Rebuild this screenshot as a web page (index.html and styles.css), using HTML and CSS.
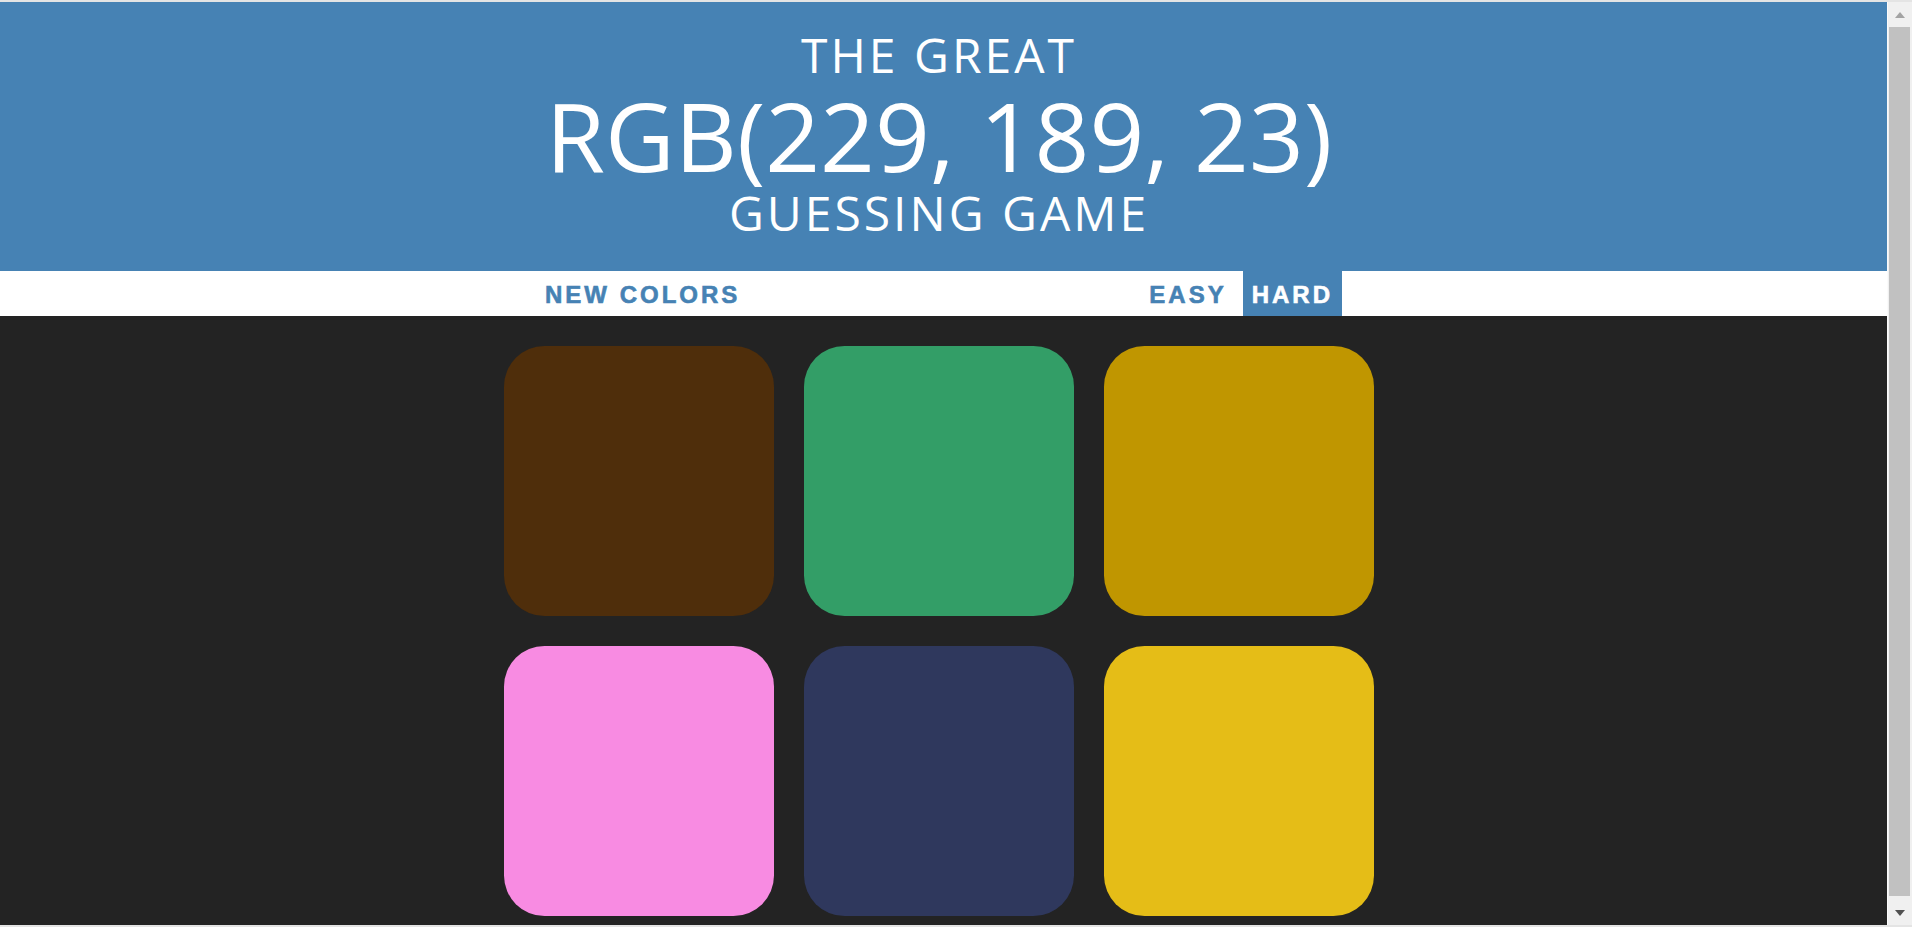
FILE: index.html
```html
<!DOCTYPE html>
<html lang="en">
<head>
<meta charset="utf-8">
<title>Color Game</title>
<link rel="stylesheet" href="styles.css">
</head>
<body>
  <main class="page">
    <h1 class="title">
      <span class="title-line">THE GREAT</span>
      <span class="color-display">RGB(229, 189, 23)</span>
      <span class="title-line">GUESSING GAME</span>
    </h1>
    <nav class="stripe">
      <button class="btn">NEW COLORS</button>
      <span class="message"></span>
      <button class="btn mode">EASY</button>
      <button class="btn mode selected">HARD</button>
    </nav>
    <section class="board">
      <div class="square" style="background: rgb(79, 46, 11);"></div>
      <div class="square" style="background: rgb(51, 158, 103);"></div>
      <div class="square" style="background: rgb(192, 150, 0);"></div>
      <div class="square" style="background: rgb(248, 139, 226);"></div>
      <div class="square" style="background: rgb(47, 56, 93);"></div>
      <div class="square" style="background: rgb(229, 189, 23);"></div>
    </section>
  </main>
  <aside class="scrollbar">
    <div class="scroll-up"></div>
    <div class="scroll-thumb"></div>
    <div class="scroll-down"></div>
  </aside>
</body>
</html>
```
FILE: styles.css
```css
html, body {
  margin: 0;
  padding: 0;
}

body {
  height: 927px;
  box-sizing: border-box;
  border-top: 2px solid #e4e4e4;
  border-bottom: 2px solid #e4e4e4;
  background: #232323;
  overflow: hidden;
  display: flex;
  font-family: "Open Sans", "DejaVu Sans", sans-serif;
}

.page {
  flex: 1;
  min-width: 0;
}

.title {
  margin: 0;
  padding: 27px 9px 31px 0;
  background: #4682b4;
  color: #ffffff;
  font-weight: 400;
  font-size: 48px;
  line-height: 1.1;
  text-align: center;
}

.title-line {
  display: block;
  letter-spacing: 3px;
}

.color-display {
  display: block;
  font-size: 200%;
}

.stripe {
  height: 45px;
  background: #ffffff;
  display: flex;
  justify-content: center;
  align-items: stretch;
  gap: 7px;
  padding-right: 9px;
}

.btn {
  border: none;
  background: none;
  margin: 0;
  padding: 2px 9px 0;
  font-family: "Liberation Sans", Arial, sans-serif;
  font-weight: 700;
  font-size: 24px;
  letter-spacing: 3px;
  color: #4682b4;
  -webkit-text-stroke: 0.6px currentColor;
  cursor: pointer;
  outline: none;
}

.btn.selected {
  background: #4682b4;
  color: #ffffff;
}

.message {
  width: 377px;
}

.board {
  display: grid;
  grid-template-columns: repeat(3, 270px);
  grid-auto-rows: 270px;
  gap: 30px;
  justify-content: center;
  padding: 30px 9px 0 0;
}

.square {
  border-radius: 15%;
}

.scrollbar {
  width: 25px;
  box-sizing: border-box;
  border-left: 1px solid #fbfbfb;
  background: #f0f0f0;
  display: flex;
  flex-direction: column;
}

.scroll-up,
.scroll-down {
  display: flex;
  justify-content: center;
}

.scroll-up {
  height: 25px;
  align-items: flex-start;
}

.scroll-up::before {
  content: "";
  margin-top: 10px;
  border-left: 5.5px solid transparent;
  border-right: 5.5px solid transparent;
  border-bottom: 6px solid #a3a3a3;
}

.scroll-thumb {
  flex: 1;
  margin: 0 2px 0 1px;
  background: #c1c1c1;
}

.scroll-down {
  height: 29px;
  align-items: flex-start;
}

.scroll-down::before {
  content: "";
  margin-top: 14px;
  border-left: 5.5px solid transparent;
  border-right: 5.5px solid transparent;
  border-top: 6px solid #505050;
}
```
